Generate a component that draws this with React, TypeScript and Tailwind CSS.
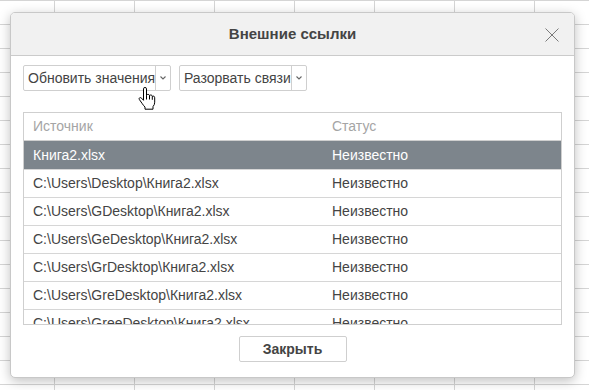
import React from 'react';

const rows = [
  'C:\\Users\\Desktop\\Книга2.xlsx',
  'C:\\Users\\GDesktop\\Книга2.xlsx',
  'C:\\Users\\GeDesktop\\Книга2.xlsx',
  'C:\\Users\\GrDesktop\\Книга2.xlsx',
  'C:\\Users\\GreDesktop\\Книга2.xlsx',
  'C:\\Users\\GreeDesktop\\Книга2.xlsx',
];

function Chevron() {
  return (
    <svg width="8" height="6" viewBox="0 0 8 6" className="text-[#666]">
      <path d="M1.5 1.5 L4 4 L6.5 1.5" fill="none" stroke="currentColor" strokeWidth="1.1" />
    </svg>
  );
}

function SplitButton({ label, width }: { label: string; width: string }) {
  return (
    <div className={`flex h-[26px] ${width} rounded-[2px] border border-[#cfcfcf] bg-white`}>
      <div className="flex flex-1 items-center pl-[4px] text-[14px] text-[#444] whitespace-nowrap">{label}</div>
      <div className="flex w-[15px] items-center justify-center border-l border-[#cfcfcf]">
        <Chevron />
      </div>
    </div>
  );
}

function HandCursor() {
  return (
    <svg width="18" height="23" viewBox="0 0 18 23" className="absolute left-[138px] top-[87px]">
      <path
        d="M5.5 1.8 Q5.5 0.5 7 0.5 Q8.5 0.5 8.5 1.8 L8.5 8.2 Q9.2 7.2 10.3 7.4 Q11.4 7.6 11.5 8.6 Q12.2 7.8 13.3 8.1 Q14.2 8.4 14.3 9.4 Q15 8.8 15.9 9.2 Q16.7 9.6 16.7 10.8 L16.7 15.2 Q16.7 17.8 15 19.6 L15 22.2 L7 22.2 L7 20 Q5.5 18.6 4 16.3 L1.4 12.6 Q0.7 11.4 1.6 10.8 Q2.6 10.2 3.7 11.3 L5.5 13.3 Z"
        fill="#fff"
        stroke="#000"
        strokeWidth="1"
        strokeLinejoin="round"
      />
      <path d="M8.5 8.2 L8.5 12.5 M11.5 8.6 L11.5 12.5 M14.3 9.4 L14.3 12.8" stroke="#000" strokeWidth="1" fill="none" />
    </svg>
  );
}

export default function App() {
  return (
    <div className="relative h-[390px] w-[589px] overflow-hidden bg-white font-['Liberation_Sans',Arial,sans-serif]">
      {/* spreadsheet grid behind the dialog */}
      <div className="flex flex-col">
        {Array.from({ length: 17 }).map((_, r) => (
          <div key={r} className="flex h-[24px] border-t border-[#d5d5d5]">
            <div className="w-[55px] shrink-0 border-r border-[#d5d5d5]" />
            {Array.from({ length: 7 }).map((_, c) => (
              <div key={c} className="w-[80px] shrink-0 border-r border-[#d5d5d5]" />
            ))}
          </div>
        ))}
      </div>

      <div className="absolute left-[10px] top-[12px] flex h-[366px] w-[565px] flex-col overflow-hidden rounded-[5px] border border-[#c8c8c8] bg-white shadow-[0_3px_12px_rgba(0,0,0,0.25)]">
        <div className="relative flex h-[43px] shrink-0 items-center justify-center border-b border-[#cbcbcb] bg-[#f1f1f1]">
          <span className="text-[15px] font-bold text-[#444]">Внешние ссылки</span>
          <svg width="14" height="14" viewBox="0 0 14 14" className="absolute right-[15px] top-[15px]">
            <path d="M0.5 0.5 L13.5 13.5 M13.5 0.5 L0.5 13.5" stroke="#7a7a7a" strokeWidth="1" />
          </svg>
        </div>

        <div className="flex flex-1 flex-col px-[12px] pt-[9px]">
          <div className="flex gap-[8px]">
            <SplitButton label="Обновить значения" width="w-[148px]" />
            <SplitButton label="Разорвать связи" width="w-[128px]" />
          </div>

          <div className="mt-[21px] h-[213px] overflow-hidden border border-[#cfcfcf] text-[14px]">
            <div className="grid h-[28px] grid-cols-[308px_1fr] items-center border-b border-[#cfcfcf] text-[#a5a5a5]">
              <div className="pl-[9px]">Источник</div>
              <div>Статус</div>
            </div>
            <div className="grid h-[28px] grid-cols-[308px_1fr] items-center bg-[#7d858c] text-white">
              <div className="pl-[9px]">Книга2.xlsx</div>
              <div>Неизвестно</div>
            </div>
            {rows.map((r) => (
              <div key={r} className="grid h-[28px] grid-cols-[308px_1fr] items-center border-t border-[#d6d6d6] text-[#444]">
                <div className="pl-[9px]">{r}</div>
                <div>Неизвестно</div>
              </div>
            ))}
          </div>

          <div className="mt-[11px] flex justify-center">
            <button className="h-[26px] w-[108px] rounded-[2px] border border-[#cfcfcf] bg-white text-[14px] font-bold text-[#444]">
              Закрыть
            </button>
          </div>
        </div>
      </div>

      <HandCursor />
    </div>
  );
}
